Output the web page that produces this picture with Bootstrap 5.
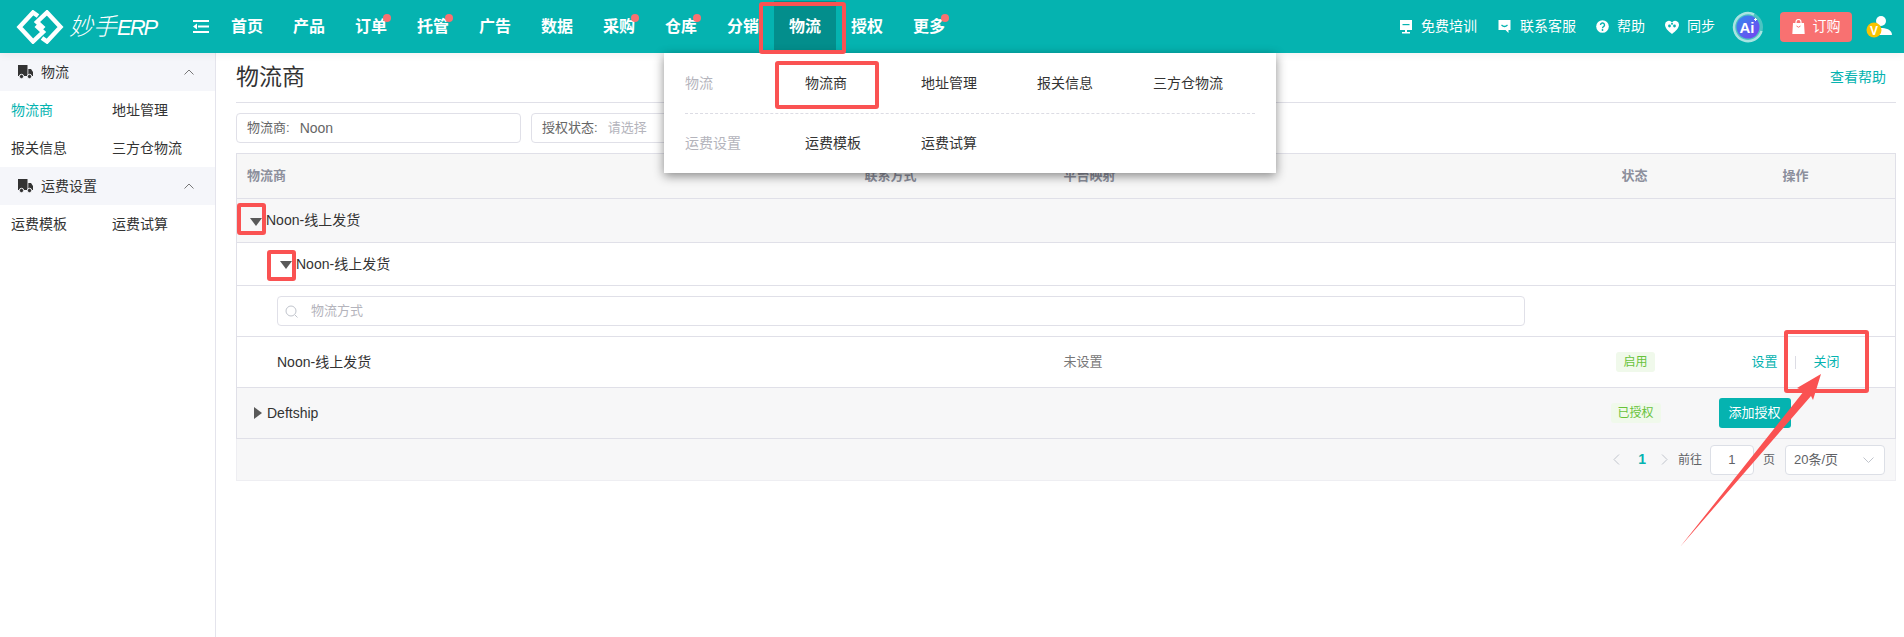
<!DOCTYPE html>
<html lang="zh-CN">
<head>
    <meta charset="UTF-8">
    <meta name="viewport" content="width=device-width, initial-scale=1.0">
    <title>妙手ERP - 物流商</title>
    <link href="https://cdn.jsdelivr.net/npm/bootstrap@5.3.0/dist/css/bootstrap.min.css" rel="stylesheet">
    <style>
        body {
            font-family: "Liberation Sans", "Noto Sans CJK SC", sans-serif;
            font-size: 14px;
            color: #333;
            height: 637px;
            overflow: hidden;
            position: relative;
        }

        /* top bar */
        .top-bar {
            height: 53px;
            background: #05b3b0;
            color: #fff;
            box-shadow: 0 2px 8px rgba(0, 0, 0, .06);
            position: relative;
        }
        .brand-box { width: 216px; padding: 0 7px 0 16px; }
        .brand-name { font-size: 24px; font-style: italic; font-weight: 300; margin-left: 5px; line-height: 1; white-space: nowrap; }
        .brand-latin { font-size: 22px; letter-spacing: -2px; }
        .top-item {
            width: 62px;
            height: 52px;
            font-size: 16px;
            font-weight: 700;
            color: #fff;
            text-decoration: none;
            position: relative;
        }
        .top-item.is-active { background: #038e8c; }
        .red-dot {
            position: absolute;
            top: 13px;
            left: 43px;
            width: 8px;
            height: 8px;
            border-radius: 50%;
            background: #f87171;
        }
        .top-tools { margin-left: auto; padding-right: 12px; }
        .tool-link { color: #fff; text-decoration: none; font-size: 14px; margin-right: 20px; gap: 8px; }
        .ai-mark { margin-right: 16px; margin-left: -3px; }
        .order-btn {
            width: 72px;
            height: 30px;
            padding: 0;
            border: 0;
            border-radius: 4px;
            background: #f87171;
            color: #fff;
            font-size: 14px;
            gap: 8px;
            margin-right: 14px;
        }

        /* sidebar */
        .side-bar { width: 216px; height: 584px; border-right: 1px solid #e4e4ec; flex-shrink: 0; }
        .side-head { height: 38px; background: #f5f6fa; padding: 0 21px 0 18px; gap: 8px; }
        .side-links { display: grid; grid-template-columns: 101px 1fr; grid-auto-rows: 38px; padding-left: 11px; align-items: center; }
        .side-links a { color: #333; text-decoration: none; }
        .side-links a.is-current { color: #05b3b0; }

        /* main */
        .main-area { padding: 0 8px 0 20px; flex: 1; min-width: 0; }
        .page-head { height: 50px; border-bottom: 1px solid #e0e0e8; padding-right: 10px; }
        .page-title { font-size: 23px; font-weight: 400; margin: 0; }
        .help-link { color: #05b3b0; text-decoration: none; }
        .filter-row { gap: 10px; margin-top: 10px; margin-bottom: 10px; }
        .filter-box {
            width: 285px;
            height: 30px;
            border: 1px solid #e0e0e8;
            border-radius: 4px;
            padding-left: 10px;
            font-size: 13px;
            color: #666;
            gap: 10px;
        }
        .filter-value { font-size: 14px; }
        .filter-hint { color: #b4b4bc; }

        /* table */
        .carrier-table { table-layout: fixed; width: 1660px; font-size: 14px; border: 1px solid #e0e0e8; margin: 0; color: #333; }
        .carrier-table > :not(caption) > * > * {
            padding: 0 0 0 10px;
            border-bottom: 1px solid #e0e0e8;
            vertical-align: middle;
            box-shadow: none;
            background: transparent;
            color: inherit;
        }
        .carrier-table thead th { height: 45px; color: #8c8f9c; font-size: 13px; font-weight: 700; background: #f7f7f7; }
        .carrier-table .row-grey > td { background: #f7f7f8; }
        .row-a > td { height: 44px; }
        .row-b > td { height: 43px; }
        .row-c > td { height: 51px; }
        .row-d > td { height: 51px; }
        .carrier-table > :not(caption) > * > .status-col { padding-left: 0; }
        .carrier-table > :not(caption) > * > .head-op { padding-left: 75px; }
        .carrier-table > :not(caption) > * > .op-set { padding-left: 44px; }
        .carrier-table > :not(caption) > * > .op-add { padding-left: 11px; }
        .carrier-table > :not(caption) > * > .search-cell { padding-left: 40px; }
        .carrier-table > :not(caption) > * > .name-sub { padding-left: 40px; }
        .carrier-table .unset-text { color: #777; font-size: 13px; }
        .caret-down { width: 0; height: 0; border-left: 6.5px solid transparent; border-right: 6.5px solid transparent; border-top: 8px solid #595959; margin-left: 3px; margin-right: 4px; margin-top: 2px; }
        .caret-right { width: 0; height: 0; border-top: 6.5px solid transparent; border-bottom: 6.5px solid transparent; border-left: 8px solid #595959; margin-left: 7px; margin-right: 5px; }
        .search-box {
            width: 1248px;
            height: 30px;
            border: 1px solid #e0e0e8;
            border-radius: 4px;
            padding-left: 7px;
            gap: 13px;
            font-size: 13px;
            color: #b4b4bc;
        }
        .status-wrap { width: 48px; }
        .state-tag { background: #f0f9eb; color: #67c23a; font-size: 12px; font-weight: 400; height: 20px; line-height: 20px; padding: 0 7px; border-radius: 3px; }
        .op-link { color: #05b3b0; text-decoration: none; font-size: 13px; }
        .op-split { width: 1px; height: 13px; background: #dcdce4; margin: 0 18px 0 17px; }
        .add-btn { width: 72px; height: 30px; padding: 0; border: 0; border-radius: 3px; background: #05b3b0; color: #fff; font-size: 13px; }
        .pager-bar {
            height: 42px;
            background: #f7f7f8;
            border: 1px solid #eeeef2;
            border-top: 0;
            padding-right: 10px;
            font-size: 13px;
            color: #606266;
        }
        .pager-arrow { color: #c0c4cc; }
        .pager-num { color: #05b3b0; font-weight: 700; font-size: 14px; margin: 0 15px 0 18px; }
        .pager-word { font-size: 12px; }
        .pager-next { margin-right: 10px; }
        .pager-input { width: 44px; height: 30px; background: #fff; border: 1px solid #dcdfe6; border-radius: 4px; margin: 0 9px 0 8px; }
        .pager-size { width: 100px; height: 30px; background: #fff; border: 1px solid #dcdfe6; border-radius: 4px; margin-left: 10px; padding: 0 10px 0 8px; }

        /* logistics menu, open over the page */
        .drop-panel {
            position: absolute;
            top: 53px;
            left: 664px;
            width: 612px;
            height: 120px;
            background: #fff;
            padding: 0 21px;
            box-shadow: 0 3px 10px rgba(0, 0, 0, .45);
        }
        .drop-row { height: 60px; }
        .drop-row + .drop-row { border-top: 1px dashed #dcdce4; }
        .drop-label { flex: 0 0 120px; color: #b4b4bc; }
        .drop-item { flex: 0 0 116px; color: #333; text-decoration: none; white-space: nowrap; }

        /* red marks drawn on the screenshot */
        .mark-layer { position: absolute; left: 0; top: 0; pointer-events: none; }
    </style>
</head>
<body>
    <header class="top-bar d-flex align-items-center">
        <div class="brand-box d-flex align-items-center">
            <svg width="48" height="34" viewBox="0 0 48 34" fill="none" stroke="#fff" stroke-width="4.4" stroke-linejoin="miter">
                <path d="M22 6 L17 2.5 L3.5 17 L17 31.5 L27 22 L20 15.5"/>
                <path d="M26 28 L31 31.5 L44.5 17 L31 2.5 L21 12 L28 18.5"/>
            </svg>
            <span class="brand-name">妙手<span class="brand-latin">ERP</span></span>
            <svg class="ms-auto" width="16" height="13" viewBox="0 0 16 13" fill="#fff">
                <path d="M0 0h16v2H0zM5 5.500h11v2H5zM0 11h16v2H0z"/>
                <path d="M4 3.500v6L0 6.500z"/>
            </svg>
        </div>
        <nav class="d-flex align-items-center">
            <a class="top-item d-flex align-items-center justify-content-center" href="#">首页</a>
            <a class="top-item d-flex align-items-center justify-content-center" href="#">产品</a>
            <a class="top-item d-flex align-items-center justify-content-center" href="#">订单<span class="red-dot"></span></a>
            <a class="top-item d-flex align-items-center justify-content-center" href="#">托管<span class="red-dot"></span></a>
            <a class="top-item d-flex align-items-center justify-content-center" href="#">广告</a>
            <a class="top-item d-flex align-items-center justify-content-center" href="#">数据</a>
            <a class="top-item d-flex align-items-center justify-content-center" href="#">采购<span class="red-dot"></span></a>
            <a class="top-item d-flex align-items-center justify-content-center" href="#">仓库<span class="red-dot"></span></a>
            <a class="top-item d-flex align-items-center justify-content-center" href="#">分销</a>
            <a class="top-item is-active d-flex align-items-center justify-content-center" href="#">物流</a>
            <a class="top-item d-flex align-items-center justify-content-center" href="#">授权</a>
            <a class="top-item d-flex align-items-center justify-content-center" href="#">更多<span class="red-dot"></span></a>
        </nav>
        <div class="top-tools d-flex align-items-center">
            <a class="tool-link d-flex align-items-center" href="#">
                <svg width="14" height="16" viewBox="0 0 14 16" fill="#fff"><path d="M1 1h12v10H8v2h3v1.500H3V13h3v-2H1z"/><path d="M3.500 5h7v1.200h-7z" fill="#05b3b0"/></svg>
                免费培训
            </a>
            <a class="tool-link d-flex align-items-center" href="#">
                <svg width="15" height="15" viewBox="0 0 14 15" fill="#fff"><path d="M1 1h12v10h-2v3l-3-3H1z"/><path d="M4 6q3 3 6 0" fill="none" stroke="#05b3b0" stroke-width="1.200"/></svg>
                联系客服
            </a>
            <a class="tool-link d-flex align-items-center" href="#">
                <svg width="13" height="13" viewBox="0 0 13 13"><circle cx="6.500" cy="6.500" r="6.300" fill="#fff"/><path d="M4.500 5a2 2 0 1 1 3 1.700c-.7.400-1 .8-1 1.500" fill="none" stroke="#05b3b0" stroke-width="1.400"/><circle cx="6.500" cy="10" r=".9" fill="#05b3b0"/></svg>
                帮助
            </a>
            <a class="tool-link d-flex align-items-center" href="#">
                <svg width="14" height="14" viewBox="0 0 14 14" fill="#fff"><path d="M7 14C3 11 0 8 0 4.500A3.800 3.800 0 0 1 7 2.500 3.800 3.800 0 0 1 14 4.500C14 8 11 11 7 14z"/><circle cx="4.500" cy="6" r="1.400" fill="#05b3b0"/><circle cx="9.500" cy="6" r="1.400" fill="#05b3b0"/><circle cx="7" cy="3.800" r="1" fill="#05b3b0"/></svg>
                同步
            </a>
            <svg class="ai-mark" width="32" height="32" viewBox="0 0 32 32">
                <defs><linearGradient id="aiFill" x1="0" y1="0" x2="1" y2="1"><stop offset="0" stop-color="#2f8cf0"/><stop offset="1" stop-color="#7a3ff0"/></linearGradient></defs>
                <circle cx="16" cy="16" r="15" fill="#4cc4c2"/>
                <path d="M22 3.500A14 14 0 1 0 29.500 20" fill="none" stroke="#a8e4e2" stroke-width="2.500"/>
                <circle cx="16" cy="16" r="11.500" fill="url(#aiFill)"/>
                <text x="15" y="21.500" text-anchor="middle" font-size="15" font-weight="700" fill="#fff" font-family="Liberation Sans">Ai</text>
                <path d="M22 8.500h3M23.500 7v3" stroke="#fff"/>
            </svg>
            <button class="order-btn btn d-flex align-items-center justify-content-center" type="button">
                <svg width="13" height="15" viewBox="0 0 13 15" fill="#fff"><path d="M1 4h11l.7 11H.3z"/><path d="M4 5V3a2.500 2.500 0 0 1 5 0v2" fill="none" stroke="#fff" stroke-width="1.200"/><path d="M4.500 7q2 2.500 4 0" fill="none" stroke="#f87171"/></svg>
                订购
            </button>
            <svg width="26" height="24" viewBox="0 0 26 24">
                <circle cx="15" cy="6" r="5" fill="#fff"/>
                <path d="M7 20c0-5 4-7 8-7s11 1 11 7z" fill="#fff"/>
                <circle cx="8" cy="15" r="7.500" fill="#f8c300"/>
                <text x="8" y="19.500" text-anchor="middle" font-size="12" font-weight="700" fill="#fff" font-family="Liberation Sans">V</text>
            </svg>
        </div>
    </header>

    <div class="d-flex">
        <aside class="side-bar">
            <div class="side-head d-flex align-items-center">
                <svg width="15" height="14" viewBox="0 0 15 14" fill="#333"><path d="M0 0h9.500v11H0z"/><path d="M10.300 4H13l2 3v4h-4.700z"/><circle cx="3.500" cy="11.500" r="2.200" stroke="#f5f6fa"/><circle cx="11.500" cy="11.500" r="2.200" stroke="#f5f6fa"/></svg>
                <span>物流</span>
                <svg class="ms-auto" width="10" height="6" viewBox="0 0 10 6" fill="none" stroke="#777"><path d="M.5 5.500 5 1l4.500 4.500"/></svg>
            </div>
            <div class="side-links">
                <a class="is-current" href="#">物流商</a>
                <a href="#">地址管理</a>
                <a href="#">报关信息</a>
                <a href="#">三方仓物流</a>
            </div>
            <div class="side-head d-flex align-items-center">
                <svg width="15" height="14" viewBox="0 0 15 14" fill="#333"><path d="M0 0h9.500v11H0z"/><path d="M10.300 4H13l2 3v4h-4.700z"/><circle cx="3.500" cy="11.500" r="2.200" stroke="#f5f6fa"/><circle cx="11.500" cy="11.500" r="2.200" stroke="#f5f6fa"/></svg>
                <span>运费设置</span>
                <svg class="ms-auto" width="10" height="6" viewBox="0 0 10 6" fill="none" stroke="#777"><path d="M.5 5.500 5 1l4.500 4.500"/></svg>
            </div>
            <div class="side-links">
                <a href="#">运费模板</a>
                <a href="#">运费试算</a>
            </div>
        </aside>

        <main class="main-area">
            <div class="page-head d-flex align-items-center justify-content-between">
                <h1 class="page-title">物流商</h1>
                <a class="help-link" href="#">查看帮助</a>
            </div>
            <div class="filter-row d-flex">
                <div class="filter-box d-flex align-items-center"><span>物流商:</span><span class="filter-value">Noon</span></div>
                <div class="filter-box d-flex align-items-center"><span>授权状态:</span><span class="filter-hint">请选择</span></div>
            </div>
            <table class="table carrier-table">
                <colgroup>
                    <col style="width: 618px">
                    <col style="width: 199px">
                    <col style="width: 558px">
                    <col style="width: 96px">
                    <col style="width: 188px">
                </colgroup>
                <thead>
                    <tr>
                        <th>物流商</th>
                        <th>联系方式</th>
                        <th>平台映射</th>
                        <th>状态</th>
                        <th class="head-op">操作</th>
                    </tr>
                </thead>
                <tbody>
                    <tr class="row-a row-grey">
                        <td colspan="5"><div class="d-flex align-items-center"><span class="caret-down"></span>Noon-线上发货</div></td>
                    </tr>
                    <tr class="row-b">
                        <td colspan="5" class="name-sub"><div class="d-flex align-items-center"><span class="caret-down"></span>Noon-线上发货</div></td>
                    </tr>
                    <tr class="row-c">
                        <td colspan="5" class="search-cell">
                            <div class="search-box d-flex align-items-center">
                                <svg width="13" height="13" viewBox="0 0 13 13" fill="none" stroke="#c0c4cc"><circle cx="6" cy="6" r="5"/><path d="M10 10l2.500 2.500"/></svg>
                                <span>物流方式</span>
                            </div>
                        </td>
                    </tr>
                    <tr class="row-d">
                        <td colspan="2" class="search-cell">Noon-线上发货</td>
                        <td class="unset-text">未设置</td>
                        <td class="status-col"><div class="status-wrap d-flex justify-content-center"><span class="state-tag badge">启用</span></div></td>
                        <td class="op-set"><div class="d-flex align-items-center"><a class="op-link" href="#">设置</a><span class="op-split"></span><a class="op-link" href="#">关闭</a></div></td>
                    </tr>
                    <tr class="row-d row-grey">
                        <td colspan="3"><div class="d-flex align-items-center"><span class="caret-right"></span>Deftship</div></td>
                        <td class="status-col"><div class="status-wrap d-flex justify-content-center"><span class="state-tag badge">已授权</span></div></td>
                        <td class="op-add"><button class="add-btn btn" type="button">添加授权</button></td>
                    </tr>
                </tbody>
            </table>
            <div class="pager-bar d-flex align-items-center justify-content-end">
                <svg class="pager-arrow" width="7" height="11" viewBox="0 0 7 11" fill="none" stroke="currentColor"><path d="M6 .5 1 5.500l5 5"/></svg>
                <span class="pager-num">1</span>
                <svg class="pager-arrow pager-next" width="7" height="11" viewBox="0 0 7 11" fill="none" stroke="currentColor"><path d="M1 .5l5 5-5 5"/></svg>
                <span class="pager-word">前往</span>
                <span class="pager-input d-flex align-items-center justify-content-center">1</span>
                <span class="pager-word">页</span>
                <span class="pager-size d-flex align-items-center justify-content-between">
                    20条/页
                    <svg width="11" height="6" viewBox="0 0 11 6" fill="none" stroke="#c0c4cc"><path d="M.5.5l5 5 5-5"/></svg>
                </span>
            </div>
        </main>
    </div>

    <div class="drop-panel">
        <div class="drop-row d-flex align-items-center">
            <span class="drop-label">物流</span>
            <a class="drop-item" href="#">物流商</a>
            <a class="drop-item" href="#">地址管理</a>
            <a class="drop-item" href="#">报关信息</a>
            <a class="drop-item" href="#">三方仓物流</a>
        </div>
        <div class="drop-row d-flex align-items-center">
            <span class="drop-label">运费设置</span>
            <a class="drop-item" href="#">运费模板</a>
            <a class="drop-item" href="#">运费试算</a>
        </div>
    </div>

    <svg class="mark-layer" width="1904" height="637" viewBox="0 0 1904 637" fill="none" stroke="#fa5252" stroke-width="4">
        <rect x="761" y="4" width="83" height="48" rx="1"/>
        <rect x="777" y="63" width="100" height="44" rx="1"/>
        <rect x="239" y="205" width="25" height="28" rx="1"/>
        <rect x="269" y="252" width="25" height="27" rx="1"/>
        <rect x="1786" y="332" width="81" height="59" rx="1"/>
        <polygon points="1680,547 1804,391 1797,388 1821,374 1813,400 1811,396" fill="#fa5252" stroke="none"/>
    </svg>

    <script src="https://cdn.jsdelivr.net/npm/bootstrap@5.3.0/dist/js/bootstrap.bundle.min.js"></script>
</body>
</html>
